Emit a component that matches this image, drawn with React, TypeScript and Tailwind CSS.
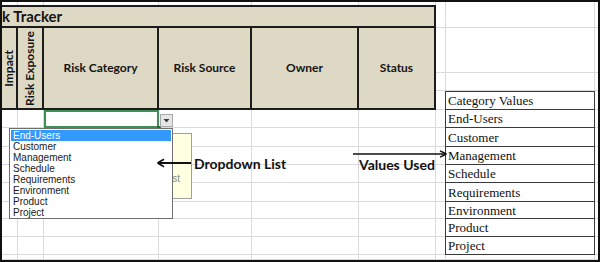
const headerFont = "font-['Lato','Open_Sans',sans-serif]";

const values = [
  { h: "h-[18px]", label: "End-Users" },
  { h: "h-[19px]", label: "Customer" },
  { h: "h-[18px]", label: "Management" },
  { h: "h-[18px]", label: "Schedule" },
  { h: "h-[19px]", label: "Requirements" },
  { h: "h-[17px]", label: "Environment" },
  { h: "h-[18px]", label: "Product" },
  { h: "h-[18px]", label: "Project" },
];

const listItems = [
  "End-Users",
  "Customer",
  "Management",
  "Schedule",
  "Requirements",
  "Environment",
  "Product",
  "Project",
];

const line = "border-[#dadada]";

function LowerRow({ h, label, selected }: { h: string; label?: string; selected?: boolean }) {
  return (
    <div className={`flex ${h}`}>
      <div className={`w-[16px] border-r border-b ${line}`} />
      <div className={`w-[26px] border-r border-b ${line}`} />
      {selected ? (
        <div className="w-[115px] border-2 border-[#3d8f56]" />
      ) : (
        <div className={`w-[115px] border-r border-b ${line}`} />
      )}
      <div className={`w-[93px] border-r border-b ${line}`} />
      <div className={`w-[107px] border-r border-b ${line}`} />
      <div className={`w-[77px] border-r border-b ${line}`} />
      <div className={`w-[9px] border-b ${line}`} />
      {label ? (
        <div className="flex w-[150px] items-center border-x border-b border-[#3a3a3a] pl-[2px] font-['Liberation_Serif',serif] text-[13px] leading-none text-[#111]">
          {label}
        </div>
      ) : (
        <div className={`w-[150px] border-x border-b ${line}`} />
      )}
      <div className={`flex-1 border-b ${line}`} />
    </div>
  );
}

function RightRow({ h, label }: { h: string; label?: string }) {
  return (
    <div className={`flex ${h}`}>
      <div className={`w-[9px] border-b ${line}`} />
      {label ? (
        <div className="flex w-[150px] items-center border border-[#3a3a3a] pl-[2px] font-['Liberation_Serif',serif] text-[13px] leading-none text-[#111]">
          {label}
        </div>
      ) : (
        <div className={`w-[150px] border-x border-b ${line}`} />
      )}
      <div className={`flex-1 border-b ${line}`} />
    </div>
  );
}

function HeaderCell({ w, children, vertical }: { w: string; children: string; vertical?: boolean }) {
  return (
    <div
      className={`${w} flex items-center justify-center border-r-2 border-[#1c1c1c] text-center text-[12px] font-bold text-[#141414] ${headerFont}`}
    >
      {vertical ? (
        <span className="rotate-180 whitespace-nowrap leading-none [writing-mode:vertical-rl]">{children}</span>
      ) : (
        children
      )}
    </div>
  );
}

export default function App() {
  return (
    <div className="relative h-[262px] w-[600px] overflow-hidden border-2 border-[#111] bg-white">
      {/* top strip */}
      <div className="flex h-[3px]">
        <div className={`w-[16px] border-r ${line}`} />
        <div className={`w-[26px] border-r ${line}`} />
        <div className={`w-[115px] border-r ${line}`} />
        <div className={`w-[93px] border-r ${line}`} />
        <div className={`w-[107px] border-r ${line}`} />
        <div className={`w-[77px] border-r ${line}`} />
        <div className="w-[9px]" />
        <div className={`w-[150px] border-x ${line}`} />
        <div className="flex-1" />
      </div>

      {/* tracker header + right-hand grid */}
      <div className="flex">
        <div className="flex w-[434px] flex-col">
          <div
            className={`flex h-[23px] items-center overflow-hidden border-y-2 border-r-2 border-[#1c1c1c] bg-[#ddd9c4] ${headerFont}`}
          >
            <span className="ml-[-20px] whitespace-nowrap text-[15px] font-bold text-[#141414]">Risk Tracker</span>
          </div>
          <div className="flex h-[82px] border-b-2 border-r-0 border-[#1c1c1c] bg-[#ddd9c4]">
            <HeaderCell w="w-[16px]" vertical>
              Impact
            </HeaderCell>
            <HeaderCell w="w-[26px]" vertical>
              Risk Exposure
            </HeaderCell>
            <HeaderCell w="w-[115px]">Risk Category</HeaderCell>
            <HeaderCell w="w-[93px]">Risk Source</HeaderCell>
            <HeaderCell w="w-[107px]">Owner</HeaderCell>
            <HeaderCell w="w-[77px]">Status</HeaderCell>
          </div>
        </div>
        <div className="flex flex-1 flex-col">
          <RightRow h="h-[23px]" />
          <RightRow h="h-[45px]" />
          <RightRow h="h-[18px]" />
          <RightRow h="h-[19px]" label="Category Values" />
        </div>
      </div>

      {/* data rows */}
      {values.map((v, i) => (
        <LowerRow key={v.label} h={v.h} label={v.label} selected={i === 0} />
      ))}
      <LowerRow h="h-[5px]" />

      {/* fill handle + dropdown button */}
      <div className="absolute left-[155px] top-[124px] h-[4px] w-[4px] bg-[#256b3b]" />
      <div className="absolute left-[158px] top-[112px] flex h-[13px] w-[13px] items-center justify-center border border-[#a9a9a9] bg-[#e6e6e6]">
        <svg width="7" height="5" viewBox="0 0 7 5">
          <path d="M0.5 1h6L3.5 4.5z" fill="#3b3b3b" />
        </svg>
      </div>

      {/* input message, partly hidden */}
      <div className="absolute left-[98px] top-[131px] h-[66px] w-[92px] border border-[#a0a0a0] bg-[#ffffe1] pr-[11px] pt-[39px] text-right font-['Liberation_Sans',sans-serif] text-[10px] leading-[12px] text-[#8a8a8a]">
        Select from list
      </div>

      {/* dropdown list */}
      <div className="absolute left-[7px] top-[126px] flex h-[91px] w-[164px] flex-col border border-[#6e6e6e] bg-white p-px font-['Liberation_Sans',sans-serif] text-[10px] leading-[11px] text-[#1a1a1a]">
        {listItems.map((item, i) => (
          <div key={item} className={i === 0 ? "h-[11px] bg-[#3399ff] pl-[2px] text-white" : "h-[11px] pl-[2px]"}>
            {item}
          </div>
        ))}
      </div>

      {/* annotations */}
      <div className="absolute left-[155px] top-[152px] flex h-[18px] items-center gap-[3px]">
        <svg width="34" height="10" viewBox="0 0 34 10">
          <path d="M2 5h32" stroke="#111" strokeWidth="2" />
          <path d="M0.5 5L7 1.2M0.5 5L7 8.8" stroke="#111" strokeWidth="1.6" fill="none" />
        </svg>
        <span className={`whitespace-nowrap text-[14px] font-bold text-[#111] ${headerFont}`}>Dropdown List</span>
      </div>

      <svg className="absolute left-[351px] top-[148px]" width="94" height="8" viewBox="0 0 94 8">
        <path d="M0 4h92" stroke="#111" strokeWidth="1.6" />
        <path d="M93.5 4L87 0.8M93.5 4L87 7.2" stroke="#111" strokeWidth="1.4" fill="none" />
      </svg>
      <span
        className={`absolute left-[357px] top-[155px] whitespace-nowrap text-[14px] font-bold leading-[16px] text-[#111] ${headerFont}`}
      >
        Values Used
      </span>
    </div>
  );
}
